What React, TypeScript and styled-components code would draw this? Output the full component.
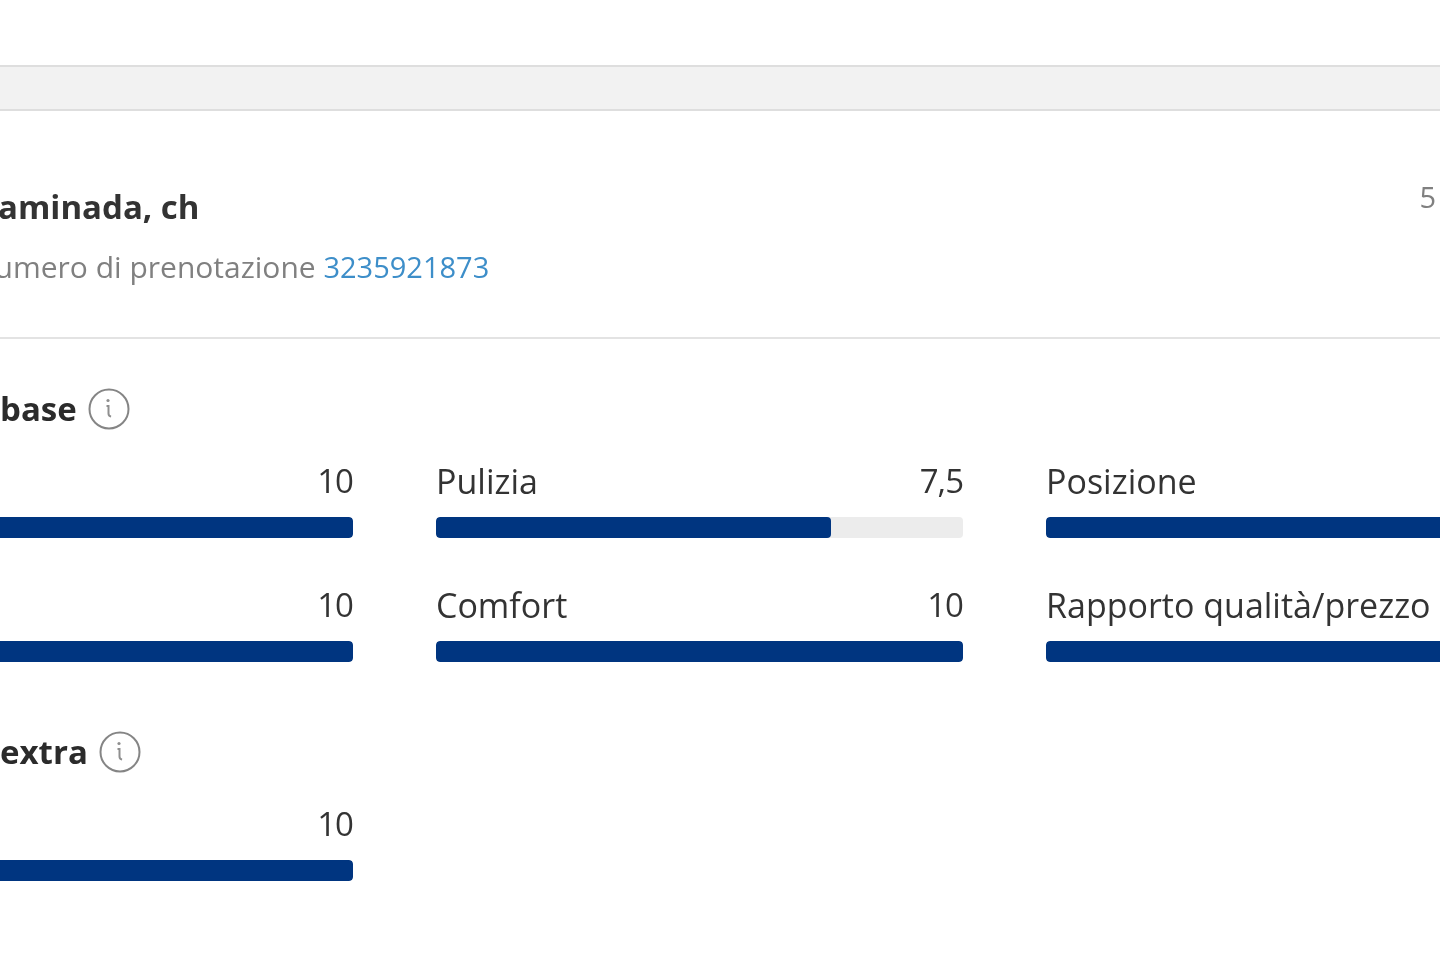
import styled, { createGlobalStyle } from 'styled-components'

const GlobalStyle = createGlobalStyle`
  html, body {
    margin: 0;
    padding: 0;
    background: #fff;
  }
  body {
    font-family: "Open Sans", "Noto Sans", "Liberation Sans", sans-serif;
    color: #333;
  }
`

type Score = { label?: string; value: string; percent: number }

const baseScores: Score[] = [
  { value: '10', percent: 100 },
  { label: 'Pulizia', value: '7,5', percent: 75 },
  { label: 'Posizione', value: '', percent: 100 },
  { value: '10', percent: 100 },
  { label: 'Comfort', value: '10', percent: 100 },
  { label: 'Rapporto qualità/prezzo', value: '', percent: 100 },
]

const InfoIcon = () => (
  <svg width="42" height="42" viewBox="0 0 42 42" fill="none">
    <circle cx="21" cy="21" r="19.5" stroke="#858585" strokeWidth="2" />
    <circle cx="20" cy="12.5" r="1.6" fill="#8f8f8f" />
    <path d="M18.5 18h2v7.5c0 1.8.9 2.8 2.6 3" stroke="#8f8f8f" strokeWidth="2" />
  </svg>
)

const ScoreItem = ({ score }: { score: Score }) => (
  <Item>
    <ItemHead>
      <span>{score.label}</span>
      <ItemValue>{score.value}</ItemValue>
    </ItemHead>
    <Track>
      <Fill style={{ width: `${score.percent}%` }} />
    </Track>
  </Item>
)

export default function App() {
  return (
    <Page>
      <GlobalStyle />
      <Band />
      <Header>
        <HeaderText>
          <Title>aminada, ch</Title>
          <Booking>
            Numero di prenotazione <BookingLink>3235921873</BookingLink>
          </Booking>
        </HeaderText>
        <HeaderDate>5</HeaderDate>
      </Header>
      <Section>
        <SectionTitle>
          base <InfoIcon />
        </SectionTitle>
        <ScoreGrid>
          {baseScores.map((score, i) => (
            <ScoreItem key={i} score={score} />
          ))}
        </ScoreGrid>
      </Section>
      <ExtraSection>
        <SectionTitle>
          extra <InfoIcon />
        </SectionTitle>
        <ScoreGrid>
          <ScoreItem score={{ value: '10', percent: 100 }} />
        </ScoreGrid>
      </ExtraSection>
    </Page>
  )
}

const Page = styled.div`
  width: 1440px;
  height: 960px;
  overflow: hidden;
  background: #fff;
  padding-top: 65px;
  box-sizing: border-box;
  filter: blur(0.6px);
`

const Band = styled.div`
  height: 46px;
  box-sizing: border-box;
  background: #f2f2f2;
  border-top: 2px solid #dedede;
  border-bottom: 2px solid #dedede;
`

const Header = styled.div`
  height: 228px;
  box-sizing: border-box;
  border-bottom: 2px solid #e3e3e3;
  display: flex;
  justify-content: space-between;
  align-items: flex-start;
  padding: 74px 4px 0 0;
`

const HeaderText = styled.div`
  display: flex;
  flex-direction: column;
  gap: 16px;
`

const Title = styled.div`
  font-size: 33px;
  line-height: 44px;
  font-weight: 700;
  color: #333;
  margin-left: -2px;
`

const Booking = styled.div`
  font-size: 30px;
  line-height: 44px;
  color: #808080;
  margin-left: -28px;
  white-space: nowrap;
`

const BookingLink = styled.span`
  font-size: 29px;
  color: #3d8ec9;
`

const HeaderDate = styled.div`
  font-size: 29px;
  line-height: 44px;
  color: #808080;
  margin-top: -10px;
`

const Section = styled.div`
  padding-top: 48px;
`

const ExtraSection = styled.div`
  padding-top: 68px;
`

const SectionTitle = styled.div`
  display: flex;
  align-items: center;
  gap: 11px;
  font-size: 33px;
  line-height: 44px;
  font-weight: 700;
  color: #2b2b2b;
`

const ScoreGrid = styled.div`
  display: grid;
  grid-template-columns: repeat(3, 527px);
  column-gap: 83px;
  row-gap: 46px;
  margin-left: -174px;
  margin-top: 29px;
`

const Item = styled.div`
  display: flex;
  flex-direction: column;
  gap: 15px;
`

const ItemHead = styled.div`
  display: flex;
  justify-content: space-between;
  height: 42px;
  font-size: 34px;
  line-height: 42px;
  color: #333;
`

const ItemValue = styled.span`
  font-size: 33px;
  letter-spacing: -1px;
`

const Track = styled.div`
  height: 21px;
  border-radius: 4px;
  background: #ececec;
  overflow: hidden;
`

const Fill = styled.div`
  height: 100%;
  border-radius: 4px;
  background: #003580;
`
